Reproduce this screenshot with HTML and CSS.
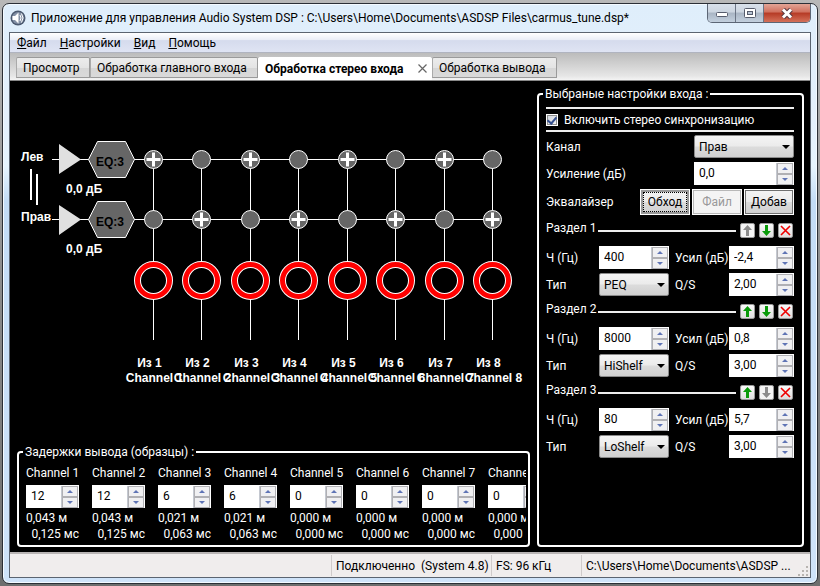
FILE: index.html
```html
<!DOCTYPE html>
<html lang="ru">
<head>
    <meta charset="UTF-8">
    <meta name="viewport" content="width=device-width, initial-scale=1.0">
    <title>Audio System DSP</title>
    <link rel="stylesheet" href="styles.css">
</head>
<body>
<div class="window">
    <header class="titlebar">
        <svg class="app-icon" width="16" height="16" viewBox="0 0 16 16">
            <circle cx="8" cy="8" r="7.5" fill="#4c5a70"/>
            <circle cx="8" cy="8" r="6" fill="#8390a5"/>
            <path d="M2.500 6h2.500l3.500-3.500v11l-3.500-3.500h-2.500z" fill="#fff"/>
            <path d="M10 5q2 3 0 6M11.500 3.500q3 4.500 0 9" fill="none" stroke="#fff"/>
        </svg>
        <span class="title">Приложение для управления Audio System DSP : C:\Users\Home\Documents\ASDSP Files\carmus_tune.dsp*</span>
        <div class="window-buttons">
            <button class="win-min" aria-label="Свернуть">
                <svg width="14" height="10" viewBox="0 0 14 10"><rect x="1.500" y="4.500" width="11" height="4" rx="1" fill="#fff" stroke="#565c6c"/></svg>
            </button>
            <button class="win-max" aria-label="Развернуть">
                <svg width="12" height="10" viewBox="0 0 12 10"><rect x=".5" y=".5" width="11" height="9" rx="1" fill="#fff" stroke="#565c6c"/><rect x="3.500" y="3.500" width="5" height="3" fill="#b8c4d4" stroke="#565c6c"/></svg>
            </button>
            <button class="win-close" aria-label="Закрыть">
                <svg width="14" height="11" viewBox="0 0 14 11"><path d="M3 1.500l8 8M11 1.500l-8 8" stroke="#5a3a40" stroke-width="5"/><path d="M3 1.500l8 8M11 1.500l-8 8" stroke="#fff" stroke-width="3"/></svg>
            </button>
        </div>
    </header>

    <div class="client">
        <nav class="menu">
            <a href="#"><u>Ф</u>айл</a>
            <a href="#"><u>Н</u>астройки</a>
            <a href="#"><u>В</u>ид</a>
            <a href="#"><u>П</u>омощь</a>
        </nav>

        <div class="tabs">
            <button class="tab">Просмотр</button>
            <button class="tab tab-wide">Обработка главного входа</button>
            <button class="tab active">Обработка стерео входа
                <svg width="9" height="9" viewBox="0 0 9 9"><path d="M.5 .5l8 8M8.500 .5l-8 8" stroke="#666" stroke-width="1.200"/></svg>
            </button>
            <button class="tab tab-out">Обработка вывода</button>
        </div>

        <main class="workspace">
            <section class="left">
                <svg class="mixer" id="mixer" width="520" height="310" viewBox="0 0 520 310">
                    <!-- входы -->
                    <g stroke="#fff" fill="none">
                        <path d="M41 78.500H481M41 138.500H481"/>
                        <path d="M20 88v31M26 93v31" stroke-width="2"/>
                    </g>
                    <path d="M48 63l22 15.500l-22 14.500zM48 124l22 14.500l-22 15.500z" fill="#e0e0e0"/>
                    <g fill="#666" stroke="#fff">
                        <path d="M77.500 78.500l9-18h28l9 18l-9 18h-28z"/>
                        <path d="M77.500 138.500l9-18h28l9 18l-9 18h-28z"/>
                    </g>
                    <g class="mixer-text">
                        <text x="10" y="80">Лев</text>
                        <text x="10" y="140">Прав</text>
                        <text x="55" y="112">0,0 дБ</text>
                        <text x="55" y="172">0,0 дБ</text>
                        <text class="eq" x="85" y="85">EQ:3</text>
                        <text class="eq" x="85" y="145">EQ:3</text>
                    </g>
                    <g id="outputs"></g>
                </svg>

                <fieldset class="group delays">
                    <legend>Задержки вывода (образцы) :</legend>
                    <div class="delay-list" id="delays"></div>
                </fieldset>
            </section>

            <fieldset class="group settings">
                <legend>Выбраные настройки входа :</legend>
                <div class="sync">
                    <input type="checkbox" id="sync" checked>
                    <label for="sync">Включить стерео синхронизацию</label>
                </div>
                <div class="row">
                    <label for="channel">Канал</label>
                    <span class="combo wide"><select id="channel"><option>Лев</option><option selected>Прав</option></select></span>
                </div>
                <div class="row">
                    <label for="gain">Усиление (дБ)</label>
                    <span class="spin wide"><input type="text" id="gain" value="0,0"><button class="up" aria-label="Больше"></button><button class="down" aria-label="Меньше"></button></span>
                </div>
                <div class="row equalizer">
                    <span>Эквалайзер</span>
                    <div class="eq-buttons">
                        <button class="btn focused">Обход</button>
                        <button class="btn" disabled>Файл</button>
                        <button class="btn">Добав</button>
                    </div>
                </div>
                <div id="sections"></div>
            </fieldset>
        </main>

        <footer class="statusbar">
            <span class="status-empty"></span>
            <span class="status-link">Подключенно&nbsp; (System 4.8)</span>
            <span class="status-rate">FS: 96 кГц</span>
            <span class="status-path">C:\Users\Home\Documents\ASDSP ...</span>
            <svg class="grip" width="11" height="11" viewBox="0 0 11 11" fill="#b8b4b0"><path d="M8 0h2v2h-2zM8 4h2v2h-2zM4 4h2v2h-2zM8 8h2v2h-2zM4 8h2v2h-2zM0 8h2v2h-2z"/></svg>
        </footer>
    </div>
</div>
<script src="script.js"></script>
</body>
</html>
```

FILE: styles.css
```css
* {
    box-sizing: border-box;
}
body {
    margin: 0;
    height: 100vh;
    padding: 3px 2px 2px 2px;
    background: linear-gradient(#b8b8b8, #8a8a8a 50%, #6e6e6e);
    font-family: Roboto, "Noto Sans", sans-serif;
    font-size: 12px;
    line-height: 16px;
    color: #000;
}
button, input, select {
    font: inherit;
    color: inherit;
    margin: 0;
}
button {
    padding: 0;
}

/* Окно */
.window {
    height: 100%;
    display: flex;
    flex-direction: column;
    padding: 0 6px 5px 6px;
    border: 1px solid #2b2f36;
    border-radius: 7px;
    background: linear-gradient(#dfeefb, #e4f0fc 20%, #e6f4fe 28%, #c3dcf6 34%, #cfe3f9);
    box-shadow: inset 0 0 0 1px #f4faff;
}
.titlebar {
    flex: none;
    height: 28px;
    display: flex;
    align-items: flex-start;
    padding-left: 1px;
}
.app-icon {
    margin-top: 6px;
    flex: none;
}
.title {
    flex: 1;
    margin: 6px 0 0 5px;
    white-space: nowrap;
    overflow: hidden;
}
.window-buttons {
    flex: none;
    display: flex;
    height: 19px;
    border: 1px solid #5c6675;
    border-top: none;
    border-radius: 0 0 5px 5px;
    overflow: hidden;
}
.window-buttons button {
    width: 28px;
    display: flex;
    align-items: center;
    justify-content: center;
    border: none;
    border-right: 1px solid #6b7585;
    background: linear-gradient(#d8e0ea, #ccd5e0 45%, #a9b5c4 50%, #c3d0de);
}
.window-buttons .win-close {
    width: 46px;
    border: none;
    background: linear-gradient(#e2a596, #d0705e 45%, #b53a25 50%, #d4715a);
}
.client {
    flex: 1;
    min-height: 0;
    display: flex;
    flex-direction: column;
    border: 1px solid #5b6470;
    background: #fff;
}

/* Меню и вкладки */
.menu {
    flex: none;
    height: 20px;
    display: flex;
    align-items: center;
    gap: 13px;
    padding-left: 7px;
    border-bottom: 1px solid #b0b4c0;
    background: linear-gradient(#fff, #eaeef7 35%, #d5dbed 40%, #dfe4f3);
}
.menu a {
    color: #000;
    text-decoration: none;
}
.tabs {
    flex: none;
    height: 28px;
    display: flex;
    padding: 4px 0 0 6px;
    border-bottom: 1px solid #888;
    background: linear-gradient(#bcbcbc, #e6e6e6 85%, #f4f4f4);
}
.tab {
    width: 74px;
    height: 21px;
    padding: 0 6px;
    border: 1px solid #9a9a9a;
    border-left-color: #aaa;
    border-radius: 2px 2px 0 0;
    background: linear-gradient(#ececec, #e4e4e4 50%, #d6d6d6 55%, #dadada);
    text-align: left;
    white-space: nowrap;
}
.tab-wide {
    width: 168px;
}
.tab-out {
    width: 125px;
}
.tab.active {
    width: 174px;
    height: 23px;
    display: flex;
    align-items: center;
    justify-content: space-between;
    padding-right: 4px;
    border-color: #fff;
    background: #fff;
    font-weight: bold;
}

/* Рабочая область */
.workspace {
    flex: 1;
    min-height: 0;
    display: flex;
    gap: 7px;
    padding: 0 6px 5px 7px;
    background: #000;
    color: #fff;
}
.left {
    flex: 1;
    min-width: 0;
    display: flex;
    flex-direction: column;
    justify-content: space-between;
}
.mixer {
    margin-left: -6px;
    flex: none;
}
.mixer-text text {
    font: bold 12px "Liberation Sans", Arial, sans-serif;
    fill: #fff;
}
.mixer-text .eq {
    fill: #000;
}
.group {
    margin: 0;
    min-width: 0;
    border: 2px solid #fff;
    border-radius: 4px;
}
.group legend {
    margin-left: -3px;
    padding: 0 2px;
}
.delays {
    height: 103px;
    padding: 5px 2px 0 7px;
}
.delay-list {
    display: flex;
    overflow: hidden;
}
.delay {
    flex: none;
    width: 66px;
}
.delay label {
    display: block;
    margin-bottom: 4px;
    white-space: nowrap;
}
.delay .spin {
    width: 53px;
    margin-bottom: 2px;
}
.delay-ms {
    width: 53px;
    text-align: right;
    white-space: nowrap;
}

/* Настройки входа */
.settings {
    flex: none;
    width: 267px;
    margin-top: 5px;
    padding: 5px 8px 0 7px;
}
.sync {
    height: 25px;
    display: flex;
    align-items: center;
    gap: 6px;
    margin-bottom: 3px;
    border-top: 2px solid #eee;
    border-bottom: 2px solid #eee;
}
.sync input {
    appearance: none;
    width: 12px;
    height: 12px;
    display: flex;
    justify-content: center;
    border: 1px solid #fff;
    outline: 1px solid #8e8f8f;
    outline-offset: -2px;
    background: linear-gradient(135deg, #cfd4dc, #f4f4f4);
}
.sync input:checked::after {
    content: "";
    width: 4px;
    height: 7px;
    border: solid #35508f;
    border-width: 0 2px 2px 0;
    transform: rotate(40deg);
}
.row {
    height: 23px;
    display: flex;
    align-items: center;
    justify-content: space-between;
    margin-bottom: 4px;
    white-space: nowrap;
}
.row.equalizer {
    height: 26px;
    margin-bottom: 8px;
}
.spin {
    display: grid;
    grid-template-columns: 1fr 17px;
    grid-template-rows: 11px 11px;
    height: 23px;
    padding: 1px 0 0 0;
    background: #fff;
    color: #000;
}
.spin.wide, .combo.wide {
    width: 100px;
}
.spin input {
    grid-row: 1 / 3;
    min-width: 0;
    width: 100%;
    padding: 0 0 2px 5px;
    border: none;
    border-right: 1px solid #c4c8d0;
    background: #fff;
}
.spin button {
    display: flex;
    align-items: center;
    justify-content: center;
    height: 11px;
    margin-right: 1px;
    border: 1px solid #b0b0b4;
    background: #f0f0f2;
}
.spin button::after {
    content: "";
    border: 3px solid transparent;
    border-top: none;
    border-bottom-color: #5f74b5;
}
.spin .down::after {
    border: 3px solid transparent;
    border-bottom: none;
    border-top-color: #5f74b5;
}
.combo {
    display: flex;
    align-items: center;
    position: relative;
    height: 23px;
}
.combo select {
    appearance: none;
    width: 100%;
    height: 23px;
    padding: 0 0 0 4px;
    border: 1px solid #8a8a8a;
    border-radius: 2px;
    background: linear-gradient(#f4f4f4, #ebebeb 48%, #dcdcdc 52%, #d0d0d0);
    color: #000;
}
.combo::after {
    content: "";
    position: absolute;
    right: 4px;
    border: 4px solid transparent;
    border-bottom: none;
    border-top-color: #000;
    pointer-events: none;
}
.eq-buttons {
    display: flex;
    gap: 2px;
}
.btn {
    width: 50px;
    height: 26px;
    border: 1px solid #fff;
    outline: 1px solid #707070;
    outline-offset: -2px;
    background: linear-gradient(#f4f4f4, #ebebeb 48%, #dcdcdc 52%, #cfcfcf);
    color: #000;
}
.btn.focused {
    box-shadow: inset 0 0 0 2px #999;
    outline: 1px dotted #000;
    outline-offset: -4px;
}
.btn:disabled {
    background: #f4f4f4;
    color: #999;
    outline-color: #b8b8b8;
}

/* Разделы эквалайзера */
.section-head {
    height: 15px;
    display: flex;
    align-items: center;
    gap: 4px;
    margin-bottom: 8px;
    padding-right: 1px;
}
.section-name {
    margin: -6px -2px 0 0;
    white-space: nowrap;
}
.section-line {
    flex: 1;
    height: 2px;
    background: #eee;
}
.icon-btn {
    width: 15px;
    height: 15px;
    display: flex;
    align-items: center;
    justify-content: center;
    border: 1px solid #999;
    border-radius: 2px;
    background: linear-gradient(#fafafa, #dedede);
    color: #0a9a0a;
}
.icon-btn:disabled {
    background: #f4f4f4;
    color: #8c8c8c;
}
.params {
    display: grid;
    grid-template-columns: 53px 70px 1fr 65px;
    grid-auto-rows: 23px;
    align-items: center;
    row-gap: 4px;
    margin-bottom: 8px;
    white-space: nowrap;
}
.params label.second {
    padding-left: 6px;
}

/* Строка состояния */
.statusbar {
    flex: none;
    height: 25px;
    display: flex;
    align-items: center;
    padding-right: 1px;
    border-top: 2px solid #b8b4b4;
    background: #f0eded;
    white-space: nowrap;
}
.statusbar span {
    height: 21px;
    padding: 3px 0 0 4px;
    border-left: 1px solid #cfcbcb;
}
.statusbar .status-empty {
    flex: 1;
    border: none;
}
.status-link {
    width: 160px;
}
.status-rate {
    width: 90px;
}
.status-path {
    width: 217px;
}
.grip {
    align-self: flex-end;
}
```

FILE: script.js
```js
// центры выходов микшера по X
const outputs = [142.5, 190.5, 239.5, 287.5, 336.5, 384.5, 433.5, 481.5];

const delays = [
    { value: '12', m: '0,043 м', ms: '0,125 мс' },
    { value: '12', m: '0,043 м', ms: '0,125 мс' },
    { value: '6', m: '0,021 м', ms: '0,063 мс' },
    { value: '6', m: '0,021 м', ms: '0,063 мс' },
    { value: '0', m: '0,000 м', ms: '0,000 мс' },
    { value: '0', m: '0,000 м', ms: '0,000 мс' },
    { value: '0', m: '0,000 м', ms: '0,000 мс' },
    { value: '0', m: '0,000 м', ms: '0,000 мс' }
];

const sections = [
    { freq: '400', gain: '-2,4', type: 'PEQ', q: '2,00' },
    { freq: '8000', gain: '0,8', type: 'HiShelf', q: '3,00' },
    { freq: '80', gain: '5,7', type: 'LoShelf', q: '3,00' }
];

function spin(id, value) {
    return `<span class="spin"><input type="text" id="${id}" value="${value}"><button class="up" aria-label="Больше"></button><button class="down" aria-label="Меньше"></button></span>`;
}

function node(x, y, on) {
    const plus = on ? `<path d="M${x - 7} ${y}h14M${x} ${y - 7}v14" stroke="#fff" stroke-width="3"/>` : '';
    return `<circle cx="${x}" cy="${y}" r="9" fill="#666" stroke="#fff"/>${plus}`;
}

document.getElementById('outputs').innerHTML = outputs.map((x, i) => `
    <path d="M${x} 78V259" stroke="#fff"/>
    ${node(x, 78.5, i % 2 === 0)}
    ${node(x, 138.5, i % 2 === 1)}
    <circle cx="${x}" cy="199.5" r="16" fill="#000" stroke="#fff" stroke-width="7"/>
    <circle cx="${x}" cy="199.5" r="16" fill="none" stroke="#f00" stroke-width="5"/>
    <g class="mixer-text" text-anchor="middle">
        <text x="${x - 4}" y="286">Из ${i + 1}</text>
        <text x="${x + 1}" y="301">Channel ${i + 1}</text>
    </g>`).join('');

document.getElementById('delays').innerHTML = delays.map((d, i) => `
    <div class="delay">
        <label for="delay${i}">Channel ${i + 1}</label>
        ${spin('delay' + i, d.value)}
        <div>${d.m}</div>
        <div class="delay-ms">${d.ms}</div>
    </div>`).join('');

const arrowUp = '<svg width="9" height="11" viewBox="0 0 9 11"><path d="M4.500 0l4.500 5h-3v6h-3v-6h-3z" fill="currentColor"/></svg>';
const arrowDown = '<svg width="9" height="11" viewBox="0 0 9 11"><path d="M4.500 11l4.500-5h-3v-6h-3v6h-3z" fill="currentColor"/></svg>';
const cross = '<svg width="11" height="11" viewBox="0 0 11 11"><path d="M1 1l9 9M10 1l-9 9" stroke="#e00" stroke-width="1.600"/></svg>';

document.getElementById('sections').innerHTML = sections.map((s, i) => `
    <div class="section-head">
        <span class="section-name">Раздел ${i + 1}</span>
        <span class="section-line"></span>
        <button class="icon-btn" aria-label="Вверх" ${i === 0 ? 'disabled' : ''}>${arrowUp}</button>
        <button class="icon-btn" aria-label="Вниз" ${i === sections.length - 1 ? 'disabled' : ''}>${arrowDown}</button>
        <button class="icon-btn" aria-label="Удалить">${cross}</button>
    </div>
    <div class="params">
        <label for="freq${i}">Ч (Гц)</label>
        ${spin('freq' + i, s.freq)}
        <label class="second" for="gain${i}">Усил (дБ)</label>
        ${spin('gain' + i, s.gain)}
        <label for="type${i}">Тип</label>
        <span class="combo"><select id="type${i}"><option>${s.type}</option></select></span>
        <label class="second" for="q${i}">Q/S</label>
        ${spin('q' + i, s.q)}
    </div>`).join('');
```
